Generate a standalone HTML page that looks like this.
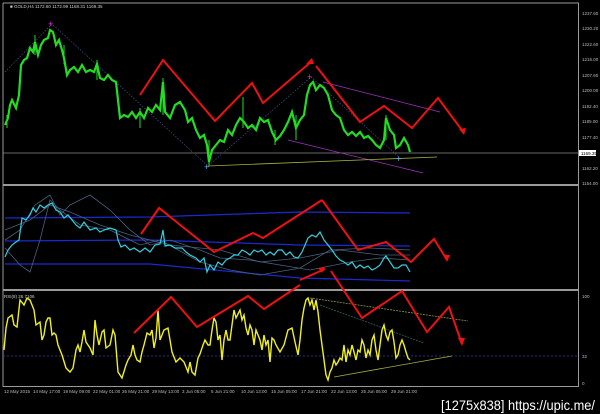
<!DOCTYPE html>
<html><head><meta charset="utf-8"><style>
html,body{margin:0;padding:0;background:#000;width:600px;height:414px;overflow:hidden}
svg{display:block}
text{font-family:"Liberation Sans",sans-serif}
</style></head><body>
<svg width="600" height="414" viewBox="0 0 600 414" xmlns="http://www.w3.org/2000/svg">
<rect width="600" height="414" fill="#000"/>
<g fill="none" stroke="#9a9a9a">
<line x1="3" y1="3" x2="579" y2="3" stroke-width="1"/>
<line x1="3" y1="3" x2="3" y2="387"/>
<line x1="578.5" y1="3" x2="578.5" y2="387"/>
<line x1="3" y1="185" x2="579" y2="185" stroke-width="2"/>
<line x1="3" y1="290" x2="579" y2="290" stroke-width="2"/>
<line x1="3" y1="386.5" x2="579" y2="386.5"/>
</g>
<line x1="3" y1="153" x2="578" y2="153" stroke="#8a8a8a" stroke-width="0.8"/>
<text x="10" y="8" font-size="4.5" fill="#ccc">■ GOLD,H4  1172.60 1172.99 1168.31 1169.35</text>
<g font-size="4.5" fill="#bbb">
<text x="582" y="15">1237.60</text><text x="582" y="30">1230.20</text><text x="582" y="46">1222.60</text>
<text x="582" y="61">1215.00</text><text x="582" y="77">1207.60</text><text x="582" y="92">1200.00</text>
<text x="582" y="108">1192.40</text><text x="582" y="123">1185.00</text><text x="582" y="139">1177.40</text>
<text x="582" y="170">1162.20</text><text x="582" y="185">1154.00</text>
<text x="582" y="298">100</text><text x="582" y="358">32</text><text x="582" y="385">0</text>
</g>
<rect x="579" y="150" width="17" height="6" fill="#fff"/>
<text x="581" y="155" font-size="4.5" fill="#000">1169.35</text>
<polyline points="5,72 52,24 208,166 311,77 400,158" fill="none" stroke="#3a4a7a" stroke-width="0.8" stroke-dasharray="1.5,1.5"/>
<polyline fill="none" stroke="#22dd22" stroke-width="2.2" points="5,125 8,118 10,105 12,100 16,108 19,95 21,65 24,60 27,58 30,48 33,52 35,42 38,55 41,45 44,40 48,38 50,30 53,32 56,45 59,40 62,50 64,58 67,75 70,70 74,67 78,72 82,65 86,72 90,70 94,72 97,64 100,78 104,80 108,75 112,80 116,82 118,100 120,118 124,115 128,117 132,112 136,118 140,112 144,118 148,108 152,112 156,105 160,110 163,82 165,112 170,118 175,105 180,102 185,110 188,122 192,118 196,130 200,138 204,135 207,145 209,162 212,150 216,145 220,140 224,142 228,130 232,135 236,125 240,118 244,122 248,128 252,125 256,130 260,118 264,122 268,120 272,132 276,140 280,136 284,130 288,122 292,112 296,128 300,120 304,115 307,95 310,85 313,82 316,90 320,85 324,88 328,95 332,110 336,115 340,118 344,130 348,135 352,132 356,136 360,132 364,138 368,136 372,140 376,145 380,148 384,140 386,118 390,130 394,135 396,148 400,145 404,138 408,145 410,152"/>
<g stroke="#22dd22" stroke-width="1">
<line x1="35" y1="35" x2="35" y2="55"/><line x1="97" y1="60" x2="97" y2="80"/><line x1="163" y1="78" x2="163" y2="115"/>
<line x1="140" y1="108" x2="140" y2="128"/><line x1="209" y1="140" x2="209" y2="165"/><line x1="243" y1="97" x2="243" y2="128"/>
<line x1="275" y1="130" x2="275" y2="145"/><line x1="296" y1="115" x2="296" y2="140"/><line x1="386" y1="115" x2="386" y2="140"/>
<line x1="7" y1="115" x2="7" y2="128"/><line x1="64" y1="45" x2="64" y2="64"/>
</g>
<line x1="323" y1="82" x2="440" y2="112" stroke="#a030c0" stroke-width="0.8"/>
<line x1="288" y1="140" x2="423" y2="173" stroke="#a030c0" stroke-width="0.8"/>
<line x1="208" y1="166" x2="437" y2="157" stroke="#a8b040" stroke-width="0.8"/>
<text x="48" y="27" font-size="9" fill="#e030e0">+</text>
<text x="307" y="80" font-size="9" fill="#e030e0">+</text>
<text x="204" y="170" font-size="9" fill="#60b0ff">+</text>
<text x="396" y="162" font-size="9" fill="#60b0ff">+</text>
<g fill="none" stroke-width="1.2" stroke="#1a2ad0">
<polyline points="5,218 150,217 300,212 410,213"/>
<polyline points="5,241 150,240 300,245 410,246"/>
<polyline points="5,264 150,264 300,278 410,281"/>
</g>
<g fill="none" stroke="#4a6080" stroke-width="0.8">
<polyline points="5,240 20,230 35,205 50,195 60,215 70,205 90,195 110,210 130,230 150,245 170,240 200,250 220,258 250,260 280,265 310,270 350,262 380,258 410,260"/>
<polyline points="5,248 20,265 30,272 40,240 50,200 60,210 80,225 110,230 140,245 160,240 200,262 230,270 260,275 300,268 330,250 370,248 410,250"/>
<polyline points="5,230 30,220 50,205 70,212 100,225 130,235 170,245 220,250 260,262 300,258 340,250 380,255 410,255"/>
</g>
<polyline fill="none" stroke="#30d0e0" stroke-width="1.2" points="5,257 8,250 12,245 16,242 19,240 22,218 26,220 30,215 33,208 36,212 40,205 44,208 48,205 52,203 56,210 60,212 64,218 68,215 72,220 76,225 80,228 84,222 90,230 96,228 100,232 104,230 110,228 116,230 118,240 121,247 125,245 130,250 134,248 140,252 145,248 150,252 155,245 160,244 163,230 165,246 170,245 175,248 182,248 186,252 190,255 196,258 200,262 204,258 207,272 210,265 214,270 218,262 222,265 226,260 230,258 234,255 238,255 242,250 246,252 250,255 254,250 258,252 262,250 266,255 270,252 274,255 278,250 282,250 286,255 290,252 294,257 298,258 302,252 305,245 308,238 312,235 316,237 320,232 324,240 328,245 332,250 336,256 340,260 344,262 348,265 352,262 356,268 360,265 364,268 368,266 372,270 376,268 380,265 384,258 386,256 390,262 394,268 398,268 402,265 406,265 410,272"/>
<text x="4" y="298" font-size="4.5" fill="#ccc">RSI(8) 26.7106</text>
<line x1="3" y1="356" x2="578" y2="356" stroke="#3040b0" stroke-width="0.8" stroke-dasharray="2,2"/>
<line x1="310" y1="298" x2="468" y2="321" stroke="#8a9a40" stroke-width="0.8" stroke-dasharray="2,1"/>
<line x1="320" y1="305" x2="424" y2="343" stroke="#306060" stroke-width="0.8" stroke-dasharray="2,1"/>
<line x1="334" y1="377" x2="452" y2="356" stroke="#a8b040" stroke-width="0.8"/>
<polyline fill="none" stroke="#f0f020" stroke-width="1.4" points="4,350 6,328 8,318 12,315 14,325 17,327 20,300 24,305 27,298 30,300 34,310 36,325 40,322 42,340 44,335 46,322 48,318 50,318 52,335 54,333 56,335 58,345 62,355 66,368 70,372 73,368 76,350 78,345 80,352 82,342 84,330 86,342 90,348 93,355 95,320 97,335 99,345 102,332 104,330 106,348 110,345 113,330 115,335 118,372 122,378 126,365 128,360 131,355 133,345 135,355 137,360 140,362 142,352 144,345 147,333 150,335 152,330 154,348 156,338 158,310 160,340 164,330 168,328 170,340 172,352 176,362 180,358 184,362 188,372 190,362 192,372 195,375 198,358 200,354 203,345 205,340 208,345 210,345 212,330 214,318 216,322 218,340 220,335 222,360 224,340 226,330 228,340 230,340 234,310 236,318 240,310 242,320 244,315 246,328 248,335 250,325 252,330 254,345 256,330 258,335 260,340 262,350 264,335 266,345 268,340 270,362 272,338 274,340 276,345 280,352 284,345 288,330 292,328 295,342 298,355 300,340 302,320 304,308 306,300 308,298 310,305 312,300 314,310 316,300 318,312 320,330 322,345 324,360 326,375 328,380 330,372 332,368 334,360 336,365 338,362 340,358 342,360 344,345 346,362 348,350 350,355 352,345 354,352 356,360 358,350 360,352 362,340 364,345 366,358 368,350 370,355 372,340 374,335 376,350 378,360 380,345 382,330 384,325 386,335 388,340 390,332 392,330 394,342 396,358 398,355 400,345 402,340 404,345 406,352 408,358 410,360"/>
<g fill="none" stroke="#ee1111" stroke-width="2" stroke-linejoin="miter">
<polyline points="140,95 163,60 215,121 252,83 263,103 312,61"/>
<polyline points="316,66 360,122 384,106 412,128 438,98 464,133"/>
<polyline points="141,234 159,208 214,252 253,233 263,238 322,200"/>
<polyline points="322,200 358,250 386,242 411,262 434,239 447,260"/>
<polyline points="134,333 171,297 197,327 248,296 264,309 300,285"/>
<polyline points="300,280 325,269"/>
<polyline points="331,271 362,318 402,291 427,332 449,307 462,344"/>
</g>
<g fill="#ee1111">
<polygon points="312,58 306,64 314,64"/><polygon points="464,135 459,129 466,128"/><polygon points="447,262 443,255 450,255"/><polygon points="462,346 458,338 465,338"/><polygon points="325,267 318,268 322,273"/>
</g>
<g font-size="4.5" fill="#bbb">
<text x="4" y="393">12 May 2015</text><text x="33" y="393">14 May 17:00</text><text x="63" y="393">19 May 09:00</text>
<text x="93" y="393">22 May 01:00</text><text x="122" y="393">26 May 21:00</text><text x="152" y="393">29 May 13:00</text>
<text x="182" y="393">3 Jun 05:00</text><text x="211" y="393">5 Jun 21:00</text><text x="241" y="393">10 Jun 13:00</text>
<text x="271" y="393">15 Jun 05:00</text><text x="301" y="393">17 Jun 21:00</text><text x="331" y="393">22 Jun 13:00</text>
<text x="361" y="393">25 Jun 05:00</text><text x="391" y="393">29 Jun 21:00</text>
</g>
<text x="441" y="410" font-size="14" fill="#fff" font-family="Liberation Mono, monospace" textLength="154" lengthAdjust="spacingAndGlyphs">[1275x838] https://upic.me/</text>
</svg>
</body></html>
